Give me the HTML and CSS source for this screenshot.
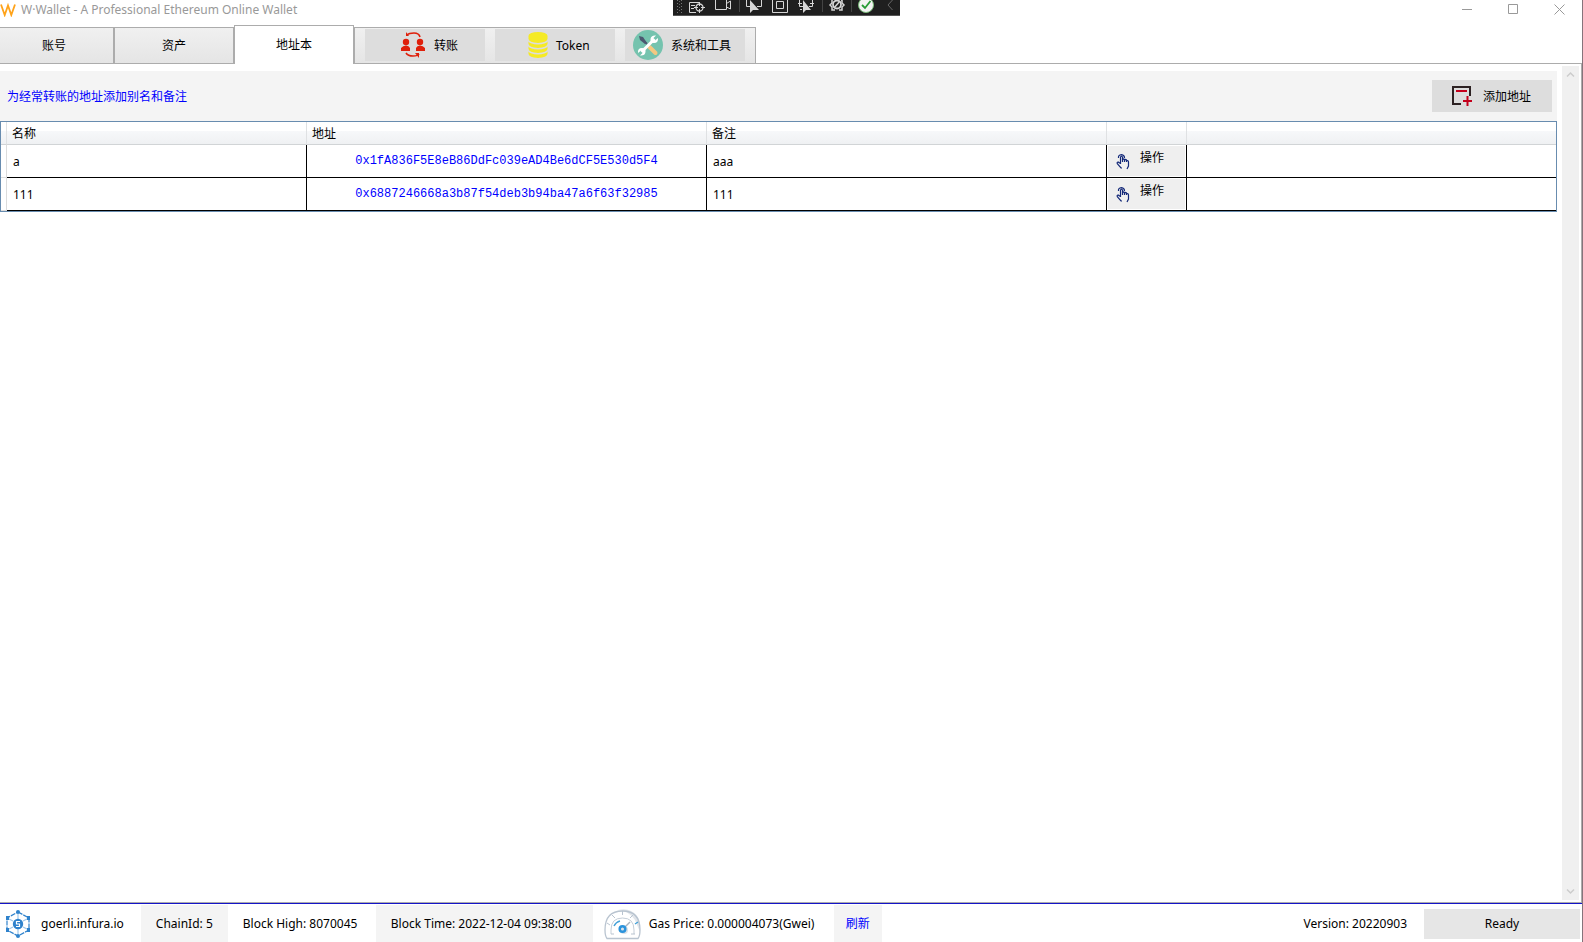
FILE: index.html
```html
<!DOCTYPE html>
<html lang="zh-CN">
<head>
<meta charset="utf-8">
<title>W·Wallet - A Professional Ethereum Online Wallet</title>
<link rel="stylesheet" href="styles.css">
</head>
<body>
<div class="window">
  <header class="titlebar">
    <svg class="logo" width="16" height="14" viewBox="0 0 16 14" aria-hidden="true"><path d="M1 1.500L4.700 12L8 2.500L11.300 12L15 1.500" fill="none" stroke="#ffa31a" stroke-width="1.800"/></svg>
    <h1 class="title">W·Wallet - A Professional Ethereum Online Wallet</h1>
    <div class="window-buttons">
      <button type="button" aria-label="Minimize"><svg width="11" height="11"><path d="M0 5.500H10" stroke="#999"/></svg></button>
      <button type="button" aria-label="Maximize"><svg width="11" height="11"><path d="M.5.5H9.500V9.500H.5Z" fill="none" stroke="#999"/></svg></button>
      <button type="button" aria-label="Close"><svg width="11" height="11"><path d="M.5.5L10.500 10.500M10.500.5L.5 10.500" stroke="#999"/></svg></button>
    </div>
  </header>

  <div class="debug-bar" aria-hidden="true">
    <svg width="227" height="15" viewBox="0 0 227 15" fill="none" stroke="#d6d6d6">
      <path d="M4.500 0V13M8.500 0V13" stroke="#777" stroke-dasharray="1 2"/><path d="M6.500 1V13" stroke="#666" stroke-dasharray="1 2"/>
      <path d="M21 2.500H16.500V12.500H23M18 5.500H22M18 8.500H21M21 2.500H26"/>
      <circle cx="26.500" cy="7.500" r="3.500" stroke-width="1.300"/><path d="M26.500 2V6M26.500 9V13M21 7.500H25M28 7.500H32"/>
      <path d="M42.500 0V9.500H53.500V0M53.500 3.500L57.500 1V9L53.500 7"/>
      <path d="M66.500 0V12M149.500 0V12M178.500 0V12" stroke="#444"/>
      <path d="M73.500 0V6.500H77M88.500 0V6.500H84"/><path d="M77 0V13L80 10L86 10Z" fill="#d6d6d6" stroke="none"/>
      <path d="M99.500 -1H114.500V12.500H99.500ZM103.500 1.500H110.500V8.500H103.500Z"/>
      <path d="M126.500 0V6.500H130M139.500 0V6.500H136M125 3.500H129M137 3.500H141M127 9.500H129"/><path d="M130 0V13L133 10L138 10Z" fill="#d6d6d6" stroke="none"/>
      <path d="M159 0V3L157 5L159 7V10H162M168 0H169V3L171 5L169 7V10H166" stroke-width="1.500"/><circle cx="164" cy="4.500" r="4" stroke-width="1.800"/><path d="M161 8L167 1" stroke-width="1.500"/>
      <circle cx="193" cy="5" r="7.500" fill="#f3f3f3" stroke="#78ba78"/><path d="M189 5L192 8L197.500 1" stroke="#279b35" stroke-width="1.800"/>
      <path d="M219.500 0L215 5L219.500 10" stroke="#666"/>
    </svg>
  </div>

  <nav class="tabs">
    <button type="button" class="tab tab-first">账号</button>
    <button type="button" class="tab">资产</button>
    <button type="button" class="tab tab-active" aria-current="page">地址本</button>
    <div class="tools">
      <button type="button" class="tool transfer">
        <svg width="26" height="28" viewBox="0 0 26 28" fill="#df200b"><circle cx="6" cy="11" r="3.200"/><circle cx="20" cy="11" r="3.200"/><path d="M1 20V17Q3 14.500 6 14.500T10 17V20ZM16 20V17Q17 14.500 20 14.500T25 17V20Z"/><path d="M7 4Q9 2 14 2T20 6M6 22Q8 25 13 25T19 23" fill="none" stroke="#df200b" stroke-width="1.600"/><path d="M6 1V5H9ZM19 27V22H15Z"/></svg>
        <span>转账</span>
      </button>
      <button type="button" class="tool token">
        <svg width="20" height="28" viewBox="0 0 20 28" fill="#f5ea25"><ellipse cx="10" cy="4.500" rx="9.500" ry="3.500"/><path d="M.5 5V8Q1 11.500 10 12Q19 11.500 19.500 8V5ZM.5 10.500V13Q1 16.500 10 17Q19 16.500 19.500 13V10.500Q18 13 10 13.500Q2 13 .5 10.500ZM.5 15.500V18Q1 21.500 10 22Q19 21.500 19.500 18V15.500Q18 18 10 18.500Q2 18 .5 15.500ZM.5 20.500V23Q1 26.500 10 27Q19 26.500 19.500 23V20.500Q18 23 10 23.500Q2 23 .5 20.500Z"/></svg>
        <span>Token</span>
      </button>
      <button type="button" class="tool system">
        <svg width="30" height="30" viewBox="0 0 30 30"><circle cx="15" cy="15" r="15" fill="#75c3ae"/><path d="M8 8L14 14" stroke="#4c5870" stroke-width="2"/><path d="M6 6L10 7L14 13L12 14L7 10Z" fill="#4c5870"/><path d="M16.500 17L22.500 23" stroke="#f4c881" stroke-width="4" stroke-linecap="round"/><path d="M8.500 22L21.500 9" stroke="#fff" stroke-width="3"/><path d="M23 5.500L20 8.500L22 10.500L25 8Q25.500 13 21 13Q17 13 17.500 9Q18 5 23 5.500ZM7 25.500L10 22.500L8 20.500L5 23Q4.500 18 9 18Q13 18 12.500 22Q12 26 7 25.500Z" fill="#fff"/></svg>
        <span>系统和工具</span>
      </button>
    </div>
  </nav>

  <div class="workspace">
    <main class="page">
      <section class="intro">
        <p class="hint">为经常转账的地址添加别名和备注</p>
        <button type="button" class="add">
          <svg width="20" height="20" viewBox="0 0 20 20" fill="none"><path d="M18 10V1H1V18H9" stroke="#2d2223" stroke-width="2"/><path d="M5 6V5H14V6M11 15H20M15.500 10V20" stroke="#c4001c" stroke-width="2"/></svg>
          <span>添加地址</span>
        </button>
      </section>
      <table class="grid">
        <colgroup><col class="c-handle"><col class="c-name"><col class="c-wide"><col class="c-wide"><col class="c-action"><col></colgroup>
        <thead><tr><th></th><th>名称</th><th>地址</th><th>备注</th><th></th><th></th></tr></thead>
        <tbody>
          <tr><td></td><td>a</td><td class="address"><a href="#a">0x1fA836F5E8eB86DdFc039eAD4Be6dCF5E530d5F4</a></td><td>aaa</td><td class="action"><button type="button"><svg class="hand" width="14" height="16" viewBox="0 0 14 16" fill="none" stroke="#142979" stroke-width="1.200"><path d="M4.500 10V3Q5.500 1.500 6.500 3V8M6.500 5.500Q7.500 4.500 8.500 5.500V8M8.500 6Q9.500 5 10.500 6V8M10.500 7Q12.500 6 12.500 8V12L11 15M4.500 9.500L2 8Q.5 8.500 1.500 10L5 14H6M2.500 4Q2 1 5.500 .7Q8.500 1 8.500 4"/></svg><span>操作</span></button></td><td></td></tr>
          <tr><td></td><td>111</td><td class="address"><a href="#b">0x6887246668a3b87f54deb3b94ba47a6f63f32985</a></td><td>111</td><td class="action"><button type="button"><svg class="hand" width="14" height="16" viewBox="0 0 14 16" fill="none" stroke="#142979" stroke-width="1.200"><path d="M4.500 10V3Q5.500 1.500 6.500 3V8M6.500 5.500Q7.500 4.500 8.500 5.500V8M8.500 6Q9.500 5 10.500 6V8M10.500 7Q12.500 6 12.500 8V12L11 15M4.500 9.500L2 8Q.5 8.500 1.500 10L5 14H6M2.500 4Q2 1 5.500 .7Q8.500 1 8.500 4"/></svg><span>操作</span></button></td><td></td></tr>
        </tbody>
      </table>
    </main>
    <div class="scrollbar">
      <button type="button" aria-label="Scroll up"><svg width="9" height="7"><path d="M1 5.500L4.500 2L8 5.500" fill="none" stroke="#ccc" stroke-width="1.500"/></svg></button>
      <button type="button" aria-label="Scroll down"><svg width="9" height="7"><path d="M1 1.500L4.500 5L8 1.500" fill="none" stroke="#ccc" stroke-width="1.500"/></svg></button>
    </div>
  </div>

  <footer class="status">
    <div class="cell network">
      <svg width="26" height="28" viewBox="0 0 26 28"><path d="M13 2L24 8V20L13 26L2 20V8Z" fill="none" stroke="#2f82cc" stroke-width="1.200" stroke-dasharray="5 1"/><path d="M13 4V9M13 19V24M4 9L8 11M22 9L18 11M4 19L8 17M22 19L18 17" stroke="#9dc6e9" stroke-width="1.200"/><circle cx="13" cy="14" r="5.200" fill="#2f82cc"/><path d="M15 11.500H11.500V14H14.500V16.500H11" fill="none" stroke="#fff" stroke-width="1.200"/><g fill="#2f82cc"><circle cx="13" cy="2" r="2"/><circle cx="13" cy="26" r="2"/><path d="M1 6H4V10H1ZM22 6H25V10H22ZM1 18H4V22H1ZM22 18H25V22H22Z"/></g></svg>
      <span>goerli.infura.io</span>
    </div>
    <div class="cell shaded">ChainId: 5</div>
    <div class="cell height">Block High: 8070045</div>
    <div class="cell shaded time">Block Time: 2022-12-04 09:38:00</div>
    <div class="cell gas">
      <svg width="37" height="32" viewBox="0 0 37 32" fill="none"><path d="M14 2Q26-1 33 8Q37 14 36 24L31 12Q25 3 14 2Z" fill="#e1e5ea"/><path d="M3 30.500Q1 28 1 22Q1 3 18.500 3T36 22Q36 28 34 30.500Z" stroke="#b9c4d0" stroke-width="1.300"/><path d="M7 26V22Q7 10 18.500 10T30 22V26" stroke="#c5ced8"/><path d="M3 15L6 17M8 7L11 10M18.500 3V7M29 7L26 10M10 26H7M27 26H31" stroke="#b9c4d0"/><path d="M10 18Q12 14 16 13M31 16L34 14" stroke="#43a1d8" stroke-width="1.400"/><path d="M21 19L26 14" stroke="#a9b3be" stroke-width="1.500"/><circle cx="20" cy="22" r="4" fill="#dbe1e7"/><circle cx="18.500" cy="21" r="2.800" stroke="#2b93dc" stroke-width="2.500"/></svg>
      <span>Gas Price: 0.000004073(Gwei)</span>
    </div>
    <button type="button" class="cell shaded refresh">刷新</button>
    <div class="version">Version: 20220903</div>
    <div class="ready">Ready</div>
  </footer>
</div>
</body>
</html>
```
FILE: styles.css
```css
* { box-sizing: border-box; }

body {
  margin: 0;
  background: #fff;
  color: #000;
  font: 12px/16px "Noto Sans", "Noto Sans CJK SC", sans-serif;
}

button {
  margin: 0;
  padding: 0;
  border: 0;
  background: none;
  color: inherit;
  font: inherit;
}

svg { display: block; flex: none; }

.window {
  position: relative;
  display: flex;
  flex-direction: column;
  height: 100vh;
  border-right: 1px solid #85737b;
}

.titlebar {
  display: flex;
  align-items: center;
  height: 19px;
  flex: none;
}

.title {
  margin: 0 0 0 5px;
  color: #999;
  font-size: 12px;
  font-weight: 400;
}

.window-buttons {
  display: flex;
  margin-left: auto;
}

.window-buttons button {
  display: grid;
  place-items: center;
  width: 46px;
}

.debug-bar {
  position: absolute;
  top: 0;
  left: calc(50% - 118px);
  width: 227px;
  height: 16px;
  background: #1f1f1f;
  border-bottom: 1px solid #555;
}

.tabs {
  display: flex;
  align-items: flex-end;
  height: 45px;
  flex: none;
  border-bottom: 1px solid #acacac;
}

.tab {
  width: 120px;
  height: 36px;
  border: 1px solid #acacac;
  border-bottom: 0;
  background: linear-gradient(#f0f0f0, #e5e5e5);
}

.tab-first { width: 114px; border-left: 0; padding-right: 5px; }

.tab-active {
  height: 39px;
  margin-bottom: -1px;
  background: #fff;
}

.tools {
  display: flex;
  gap: 10px;
  height: 36px;
  padding: 1px 10px;
  border: 1px solid #acacac;
  border-bottom: 0;
  background: linear-gradient(#f0f0f0, #e5e5e5);
}

.tool {
  display: flex;
  align-items: center;
  gap: 8px;
  width: 120px;
  height: 32px;
  background: #ddd;
}

.tool span,
.add span { padding-top: 2px; }

.transfer { padding-left: 35px; }
.token { padding-left: 33px; }
.system { padding-left: 8px; }

.workspace {
  display: flex;
  gap: 5px;
  flex: 1;
  min-height: 0;
  padding: 2px 2px 2px 0;
  border-right: 1px solid #acacac;
}

.page { flex: 1; padding-top: 5px; }

.intro {
  display: flex;
  align-items: center;
  justify-content: space-between;
  height: 50px;
  padding: 0 5px 0 7px;
  background: #f4f4f4;
}

.hint { margin: 0; padding-top: 2px; color: #00f; }

.add {
  display: flex;
  align-items: center;
  gap: 11px;
  width: 120px;
  height: 32px;
  padding-left: 20px;
  background: #ddd;
}

.grid {
  width: 100%;
  table-layout: fixed;
  border: 1px solid #688caf;
  border-spacing: 0;
}

.c-handle { width: 6px; }
.c-name { width: 300px; }
.c-wide { width: 400px; }
.c-action { width: 80px; }

.grid th {
  height: 23px;
  padding: 2px 5px 0;
  border-right: 1px solid #dfe1e3;
  border-bottom: 1px solid #d1d4d6;
  background: linear-gradient(#fff 40%, #f7f8fa 40%, #eff1f3);
  font-weight: 400;
  text-align: left;
}

.grid td {
  height: 33px;
  padding: 2px 6px 0;
  border-right: 1px solid #000;
  border-bottom: 1px solid #000;
}

.grid th:first-child,
.grid td:first-child { padding: 0; }

.grid td:first-child { border-color: #dcdcdc; }

.grid th:last-child,
.grid td:last-child { border-right: 0; }

.grid .address {
  padding: 0 0 2px;
  text-align: center;
}

.address a {
  color: #00f;
  font: 12px/16px "Liberation Mono", monospace;
  text-decoration: none;
}

.grid .action { padding: 1px; }

.action button {
  display: flex;
  gap: 10px;
  width: 100%;
  height: 30px;
  padding: 4px 8px;
  background: #efefef;
}

.hand { margin-top: 4px; }

.scrollbar {
  display: flex;
  flex-direction: column;
  justify-content: space-between;
  width: 17px;
  background: #f0f0f0;
}

.scrollbar button {
  display: grid;
  place-items: center;
  height: 17px;
}

.status {
  display: flex;
  align-items: stretch;
  height: 40px;
  flex: none;
  border-top: 1px solid #acacac;
  box-shadow: inset 0 1px #1414c8;
  padding: 2px 2px 0 0;
}

.cell {
  display: flex;
  align-items: center;
  padding: 1px 15px 0;
}

.shaded { background: #f4f4f4; }

.network { gap: 10px; padding-left: 5px; padding-right: 17px; }
.height { min-width: 148px; }
.time { min-width: 217px; }
.gas { gap: 8px; min-width: 241px; padding-left: 11px; padding-right: 17px; }
.refresh { padding-left: 12px; padding-right: 12px; color: #00f; }

.version {
  margin-left: auto;
  padding-top: 1px;
  align-self: center;
}

.ready {
  display: grid;
  place-items: center;
  width: 156px;
  height: 30px;
  margin-left: 17px;
  padding-top: 1px;
  align-self: center;
  background: #e6e6e6;
}
```
